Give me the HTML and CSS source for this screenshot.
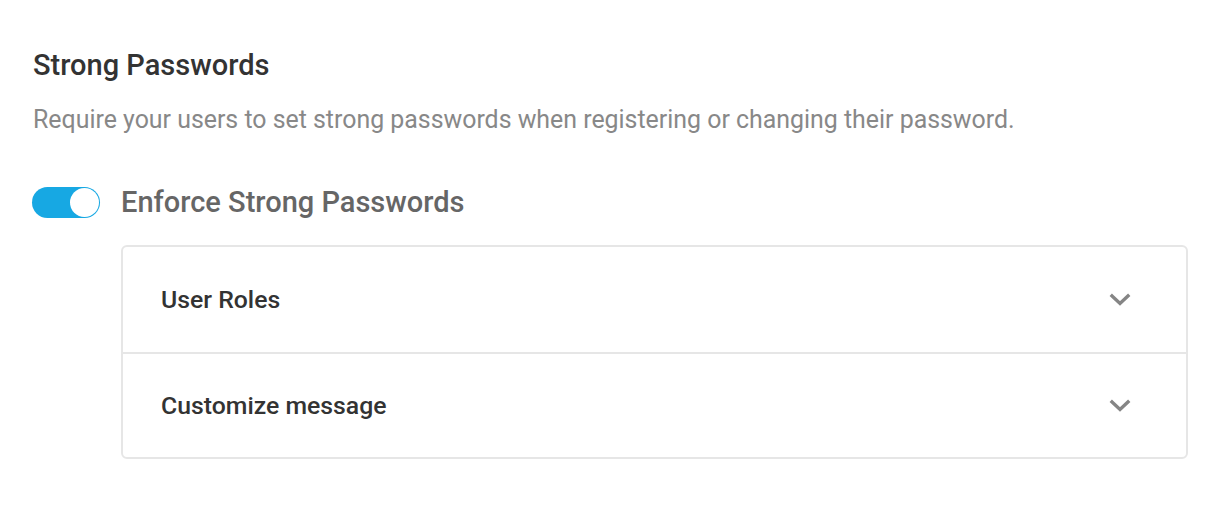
FILE: index.html
```html
<!DOCTYPE html>
<html lang="en">
<head>
<meta charset="utf-8">
<title>Strong Passwords</title>
<link rel="stylesheet" href="styles.css">
</head>
<body>
<main class="panel">
  <h2 class="title">Strong Passwords</h2>
  <p class="desc">Require your users to set strong passwords when registering or changing their password.</p>
  <div class="toggle-row">
    <span class="toggle" role="switch" aria-checked="true"><span class="knob"></span></span>
    <span class="toggle-label">Enforce Strong Passwords</span>
  </div>
  <div class="card">
    <div class="row">
      <span class="row-label">User Roles</span>
      <svg class="chev" width="22" height="14" viewBox="0 0 22 14"><path d="M3 3 L11 10.5 L19 3" fill="none" stroke="#858585" stroke-width="3.4" stroke-linecap="square"/></svg>
    </div>
    <div class="row">
      <span class="row-label">Customize message</span>
      <svg class="chev" width="22" height="14" viewBox="0 0 22 14"><path d="M3 3 L11 10.5 L19 3" fill="none" stroke="#858585" stroke-width="3.4" stroke-linecap="square"/></svg>
    </div>
  </div>
</main>
</body>
</html>
```
FILE: styles.css
```css
* { box-sizing: border-box; }
html, body { margin: 0; background: #fff; }
body { font-family: Roboto, "Noto Sans", sans-serif; }
.panel { padding: 48px 32px 0 33px; width: 1220px; }
.title { margin: 0; font-size: 29px; font-weight: 500; color: #333; line-height: 34px; }
.desc { margin: 23px 0 0; font-size: 24.9px; font-weight: 400; color: #888; line-height: 29px; }
.toggle-row { display: flex; align-items: center; gap: 21px; margin-top: 51px; height: 34px; }
.toggle { width: 68px; height: 31px; border-radius: 16px; background: #17a8e3; display: flex; align-items: center; justify-content: flex-end; padding: 1px; flex: none; margin-left: -1px; }
.knob { width: 29px; height: 29px; border-radius: 50%; background: #fff; }
.toggle-label { font-size: 29px; font-weight: 500; color: #666; line-height: 34px; }
.card { margin: 26px 0 0 88px; width: 1067px; border: 2px solid #e6e6e6; border-radius: 6px; }
.row { display: flex; align-items: center; justify-content: space-between; height: 105px; padding: 0 55px 0 38px; }
.row + .row { border-top: 2px solid #e6e6e6; }
.row-label { font-size: 24.8px; font-weight: 500; color: #333; }
.chev { display: block; }
```
